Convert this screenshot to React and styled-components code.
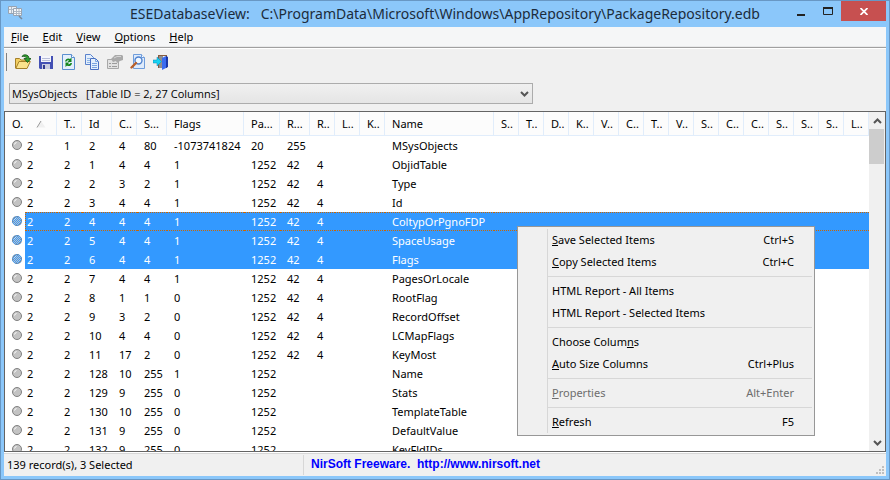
import React from 'react';
import styled, { createGlobalStyle, css } from 'styled-components';

const GlobalStyle = createGlobalStyle`
  * {
    box-sizing: border-box;
  }
  body {
    margin: 0;
    font-family: 'Noto Sans', 'Open Sans', sans-serif;
    font-size: 11px;
    color: #000;
  }
  button,
  select {
    font: inherit;
    color: inherit;
  }
`;

const Window = styled.div`
  position: relative;
  display: flex;
  flex-direction: column;
  height: 100vh;
  padding: 0 3px 3px;
  background: #8bc7fa;
  border: 1px solid #6897c4;
  overflow: hidden;
`;

const TitleBar = styled.header`
  display: flex;
  height: 26px;
  flex: none;
  padding-left: 4px;
  svg {
    display: block;
  }
`;

const AppIcon = styled.svg`
  width: 16px;
  height: 16px;
  margin-top: 4px;
`;

const Title = styled.h1`
  flex: 1;
  margin: 0;
  padding-left: 79px;
  font-size: 14px;
  line-height: 26px;
  font-weight: 400;
  text-align: center;
  white-space: pre;
  color: #1c2c3c;
`;

const WindowButtons = styled.div`
  display: flex;
`;

const WindowButton = styled.button`
  display: flex;
  align-items: center;
  justify-content: center;
  width: ${({ $close }) => ($close ? '45px' : '27px')};
  height: 20px;
  padding: 0;
  border: 0;
  background: ${({ $close }) => ($close ? '#c75050' : 'transparent')};
`;

const Client = styled.div`
  display: flex;
  flex-direction: column;
  flex: 1;
  min-height: 0;
  background: #f0f0f0;
`;

const MenuBar = styled.nav`
  display: flex;
  flex: none;
  height: 20px;
  background: #f5f6f7;
  border-bottom: 1px solid #e8e9ea;
`;

const MenuButton = styled.button`
  padding: 0 7px;
  line-height: 20px;
  border: 0;
  background: transparent;
`;

const ToolBar = styled.div`
  display: flex;
  flex: none;
  align-items: center;
  gap: 7px;
  height: 28px;
  padding-left: 2px;
  border-top: 1px solid #a0a0a0;
  box-shadow: inset 0 1px #fff;
`;

const Grip = styled.span`
  width: 1px;
  height: 18px;
  margin-right: 1px;
  background: #808080;
`;

const ToolButton = styled.button`
  width: 16px;
  height: 16px;
  padding: 0;
  border: 0;
  background: transparent;
  svg {
    display: block;
  }
`;

const TableChooser = styled.div`
  flex: none;
  padding: 8px 5px 7px;
`;

const ComboBox = styled.div`
  position: relative;
  width: 524px;
  max-width: 100%;
  svg {
    position: absolute;
    right: 4px;
    top: 8px;
    pointer-events: none;
  }
`;

const Select = styled.select`
  display: block;
  appearance: none;
  width: 100%;
  height: 21px;
  padding: 0 2px;
  font-family: 'Open Sans', sans-serif;
  border: 1px solid #acacac;
  border-radius: 0;
  background: linear-gradient(#f0f0f0, #e5e5e5);
`;

const ListView = styled.div`
  display: flex;
  flex: 1;
  min-height: 0;
  border: 1px solid #646464;
  background: #fff;
`;

const ListBody = styled.div`
  flex: 1;
  min-width: 0;
  overflow: hidden;
`;

const Table = styled.table`
  table-layout: fixed;
  width: 100%;
  border-collapse: separate;
  border-spacing: 0;
`;

const HeadCell = styled.th`
  height: 24px;
  padding: 0 0 0 7px;
  font-weight: 400;
  text-align: left;
  white-space: nowrap;
  background: #fcfcfc;
  border-right: 1px solid #e1edfb;
  border-bottom: 1px solid #e1edfb;
  svg {
    margin-left: 13px;
  }
`;

const Cell = styled.td`
  height: 19px;
  padding: 0 0 0 ${({ $first }) => ($first ? '2px' : '7px')};
  line-height: 17px;
  white-space: nowrap;
`;

const IconCell = styled.td`
  height: 19px;
  padding: 0 0 0 7px;
  svg {
    display: block;
  }
`;

const Row = styled.tr`
  ${({ $selected }) =>
    $selected &&
    css`
      ${Cell} {
        color: #fff;
        background: #3399ff;
      }
    `}
  ${({ $focused }) =>
    $focused &&
    css`
      ${Cell} {
        border-top: 1px dotted #cc6600;
        border-bottom: 1px dotted #cc6600;
      }
      ${Cell}:nth-child(2) {
        border-left: 1px dotted #cc6600;
        padding-left: 1px;
      }
    `}
`;

const ScrollBar = styled.div`
  display: flex;
  flex-direction: column;
  flex: none;
  width: 16px;
  background: #f0f0f0;
`;

const ScrollButton = styled.button`
  display: flex;
  align-items: center;
  justify-content: center;
  height: 17px;
  padding: 0;
  border: 0;
  background: transparent;
`;

const ScrollTrack = styled.div`
  flex: 1;
`;

const ScrollThumb = styled.div`
  height: 35px;
  margin-right: 1px;
  background: #cdcdcd;
`;

const StatusBar = styled.footer`
  display: flex;
  flex: none;
  align-items: center;
  height: 24px;
  border-top: 1px solid #fff;
  box-shadow: inset 0 1px #d7d7d7;
`;

const StatusText = styled.span`
  width: 299px;
  padding-left: 3px;
`;

const StatusLink = styled.a`
  flex: 1;
  height: 20px;
  padding-left: 7px;
  line-height: 18px;
  border-left: 1px solid #d7d7d7;
  font-family: 'Liberation Sans', Arial, sans-serif;
  font-size: 12px;
  font-weight: 700;
  white-space: pre;
  text-decoration: none;
  color: #0000ff;
`;

const SizeGrip = styled.svg`
  align-self: flex-end;
  margin: 0 2px 2px 0;
`;

const ContextMenu = styled.div`
  position: absolute;
  left: 516px;
  top: 225px;
  width: 298px;
  padding: 2px;
  border: 1px solid #979797;
  background: linear-gradient(#d7d7d7, #d7d7d7) 29px 2px / 1px calc(100% - 4px)
    no-repeat #f0f0f0;
`;

const MenuItem = styled.button`
  display: flex;
  justify-content: space-between;
  width: 100%;
  height: 22px;
  padding: 0 18px 0 32px;
  line-height: 22px;
  border: 0;
  background: transparent;
  color: ${({ disabled }) => (disabled ? '#6d6d6d' : '#000')};
`;

const Separator = styled.hr`
  height: 1px;
  margin: 3px 0 3px 28px;
  border: 0;
  background: #d7d7d7;
`;

const columns = [
  ['T..', 25], ['Id', 30], ['C..', 25], ['S...', 30], ['Flags', 77],
  ['Pa...', 36], ['R...', 30], ['R..', 25], ['L..', 25], ['K..', 25],
  ['Name', 109], ['S..', 25], ['T..', 25], ['D..', 25], ['K..', 25],
  ['V..', 25], ['C..', 25], ['T..', 25], ['V..', 25], ['S..', 25],
  ['C..', 25], ['C..', 25], ['S..', 25], ['S..', 25], ['S..', 25],
];

const records = [
  [2, 1, 2, 4, 80, -1073741824, 20, 255, '', '', '', 'MSysObjects'],
  [2, 2, 1, 4, 4, 1, 1252, 42, 4, '', '', 'ObjidTable'],
  [2, 2, 2, 3, 2, 1, 1252, 42, 4, '', '', 'Type'],
  [2, 2, 3, 4, 4, 1, 1252, 42, 4, '', '', 'Id'],
  [2, 2, 4, 4, 4, 1, 1252, 42, 4, '', '', 'ColtypOrPgnoFDP'],
  [2, 2, 5, 4, 4, 1, 1252, 42, 4, '', '', 'SpaceUsage'],
  [2, 2, 6, 4, 4, 1, 1252, 42, 4, '', '', 'Flags'],
  [2, 2, 7, 4, 4, 1, 1252, 42, 4, '', '', 'PagesOrLocale'],
  [2, 2, 8, 1, 1, 0, 1252, 42, 4, '', '', 'RootFlag'],
  [2, 2, 9, 3, 2, 0, 1252, 42, 4, '', '', 'RecordOffset'],
  [2, 2, 10, 4, 4, 0, 1252, 42, 4, '', '', 'LCMapFlags'],
  [2, 2, 11, 17, 2, 0, 1252, 42, 4, '', '', 'KeyMost'],
  [2, 2, 128, 10, 255, 1, 1252, '', '', '', '', 'Name'],
  [2, 2, 129, 9, 255, 0, 1252, '', '', '', '', 'Stats'],
  [2, 2, 130, 10, 255, 0, 1252, '', '', '', '', 'TemplateTable'],
  [2, 2, 131, 9, 255, 0, 1252, '', '', '', '', 'DefaultValue'],
  [2, 2, 132, 9, 255, 0, 1252, '', '', '', '', 'KeyFldIDs'],
];

function Bullet({ selected }) {
  return (
    <svg width="10" height="11" viewBox="0 0 10 11">
      <defs>
        <pattern id="dither" width="2" height="2" patternUnits="userSpaceOnUse">
          <path d="M0 0h1v1H0zM1 1h1v1H1z" fill="#3399ff" />
        </pattern>
      </defs>
      <circle cx="5" cy="5" r="4.500" fill="#c3c3c3" stroke="#808080" />
      <path d="M2.500 4.500a2.500 2.500 0 0 1 2-2" stroke="#fff" fill="none" />
      {selected && <circle cx="5" cy="5" r="5" fill="url(#dither)" />}
    </svg>
  );
}

function OpenIcon() {
  return (
    <svg width="16" height="16" viewBox="0 0 16 16">
      <path d="M.5 14V4.500h4l1.500 1.500h6v3" fill="#f3cf62" stroke="#a5802a" />
      <path d="M.8 14.500 4 7.500h11.300l-3.300 7z" fill="#fbe38c" stroke="#a5802a" />
      <path d="M7 2.500c1-2.500 7-2.500 7 2h2L12.500 8.500 9 4.500h2.500C11.500 3 9.500 2 7 2.500z" fill="#2f9e2f" stroke="#125012" strokeWidth=".8" />
    </svg>
  );
}

function SaveIcon() {
  return (
    <svg width="16" height="16" viewBox="0 0 16 16">
      <path d="M1 2h14v13H2l-1-1z" fill="#4350b4" />
      <path d="M3 2h10v6H3z" fill="#f4f5fb" />
      <path d="M4 4.500h8M4 6.500h8" stroke="#b7bcd8" />
      <path d="M4 10h8v5H4z" fill="#c9cce0" />
      <path d="M5 11h2v4H5z" fill="#30398e" />
    </svg>
  );
}

function RefreshIcon() {
  return (
    <svg width="16" height="16" viewBox="0 0 16 16">
      <path d="M1.500.5h9l3 3v12h-12z" fill="#e3effc" stroke="#5b8fd0" />
      <path d="M10.500.5v3h3" fill="#fff" stroke="#5b8fd0" />
      <path d="M4 7.500C4.500 4 8 4 9 5l1.500-1.500V8H6.500L8 6.500C7 6 6 6.500 5.500 7.500z" fill="#14851c" />
      <path d="M11 9c-.5 3.500-4 3.500-5 2.500L4.500 13V8.500h4L7 10c1 .5 2 0 2.500-1z" fill="#14851c" />
    </svg>
  );
}

function CopyIcon() {
  return (
    <svg width="16" height="16" viewBox="0 0 16 16">
      <path d="M1.500.5h5l3 3v7h-8z" fill="#e3effc" stroke="#5a82cc" />
      <path d="M3 4.500h3M3 6.500h3M3 8.500h3" stroke="#8fb4e6" />
      <path d="M6.500 4.500h5l3 3v8h-8z" fill="#e3effc" stroke="#4a6fc0" />
      <path d="M11.500 4.500v3h3M8 9.500h5M8 11.500h5M8 13.500h5" fill="none" stroke="#7aa4e0" />
    </svg>
  );
}

function PropertiesIcon() {
  return (
    <svg width="16" height="16" viewBox="0 0 16 16">
      <path d="M.5 5.500h11v9H.5z" fill="#e2e2e2" stroke="#a8a8a8" />
      <path d="M2 9.500h2M5 9.500h5M2 12.500h2M5 12.500h5" stroke="#9c9c9c" />
      <path d="m4 5 4-4h7l1 1v4l-3 1-3 2-1-2-3 1z" fill="#a9a9a9" />
      <path d="m7 4 3-1.500h4" stroke="#d4d4d4" fill="none" />
    </svg>
  );
}

function FindIcon() {
  return (
    <svg width="16" height="16" viewBox="0 0 16 16">
      <path d="M3.500.5h8l3 3v11h-11z" fill="#dfebfb" stroke="#6f9ddb" />
      <path d="M11.500.5v3h3" fill="#fff" stroke="#6f9ddb" />
      <circle cx="8.500" cy="6.500" r="3.500" fill="#f2f9ff" stroke="#4f82cf" strokeWidth="1.400" />
      <path d="m6 9-4.500 4.500" stroke="#b8602c" strokeWidth="2.400" strokeLinecap="round" />
    </svg>
  );
}

function ExitIcon() {
  return (
    <svg width="16" height="16" viewBox="0 0 16 16">
      <path d="M5 1h9v13h-1V2H6v12H5z" fill="#865c40" />
      <path d="M6 2h4v12H6z" fill="#8e8e8e" />
      <path d="m9 4 4-2v12l-4 2z" fill="#3a6cf0" />
      <path d="m13 2 2 1v10l-2 1z" fill="#1a38a8" />
      <path d="M0 6h4V3l4.500 4.500L4 12V9H0z" fill="#17d3f2" stroke="#0e86b8" strokeWidth=".5" />
    </svg>
  );
}

const tools = [
  ['Open', OpenIcon],
  ['Save', SaveIcon],
  ['Refresh', RefreshIcon],
  ['Copy', CopyIcon],
  ['Properties', PropertiesIcon],
  ['Find', FindIcon],
  ['Exit', ExitIcon],
];

function Chevron({ up }) {
  return (
    <svg width="9" height="6" viewBox="0 0 9 6">
      <path
        d={up ? 'M1 5l3.500-3.500L8 5' : 'M1 1l3.500 3.500L8 1'}
        fill="none"
        stroke="#555"
        strokeWidth="2"
      />
    </svg>
  );
}

export default function App() {
  return (
    <>
      <GlobalStyle />
      <Window>
        <TitleBar>
          <AppIcon viewBox="0 0 16 16">
            <path d="M.5 1.500h8v7h-8z" fill="#eceff3" stroke="#98a4b3" />
            <path d="M5.500 3.500h8v7h-8z" fill="#f6f8fa" stroke="#98a4b3" />
            <path d="M1 4.500h4M3.500 2v6M6 6.500h7M6 8.500h7M8.500 4v6M11 4v6" stroke="#aeb8c4" />
            <path d="m11 11 3 3" stroke="#78889a" strokeWidth="1.500" />
          </AppIcon>
          <Title>
            {'ESEDatabaseView:   C:\\ProgramData\\Microsoft\\Windows\\AppRepository\\PackageRepository.edb'}
          </Title>
          <WindowButtons>
            <WindowButton aria-label="Minimize">
              <svg width="8" height="10">
                <path d="M0 8h8v2H0z" fill="#222" />
              </svg>
            </WindowButton>
            <WindowButton aria-label="Maximize">
              <svg width="10" height="8">
                <path d="M.5 1h9v6.500h-9z" fill="none" stroke="#222" />
                <path d="M0 0h10v2H0z" fill="#222" />
              </svg>
            </WindowButton>
            <WindowButton $close aria-label="Close">
              <svg width="8" height="7" viewBox="0 0 8 7">
                <path d="m.5 0 7 7M7.500 0l-7 7" stroke="#fff" strokeWidth="1.700" />
              </svg>
            </WindowButton>
          </WindowButtons>
        </TitleBar>

        <Client>
          <MenuBar>
            <MenuButton><u>F</u>ile</MenuButton>
            <MenuButton><u>E</u>dit</MenuButton>
            <MenuButton><u>V</u>iew</MenuButton>
            <MenuButton><u>O</u>ptions</MenuButton>
            <MenuButton><u>H</u>elp</MenuButton>
          </MenuBar>

          <ToolBar>
            <Grip />
            {tools.map(([label, Icon]) => (
              <ToolButton key={label} aria-label={label} disabled={label === 'Properties'}>
                <Icon />
              </ToolButton>
            ))}
          </ToolBar>

          <TableChooser>
            <ComboBox>
              <Select aria-label="Table">
                <option>{'MSysObjects\u00a0\u00a0 [Table ID = 2, 27 Columns]'}</option>
              </Select>
              <Chevron />
            </ComboBox>
          </TableChooser>

          <ListView>
            <ListBody>
              <Table>
                <colgroup>
                  <col style={{ width: 20 }} />
                  <col style={{ width: 32 }} />
                  {columns.map(([, width], i) => (
                    <col key={i} style={{ width }} />
                  ))}
                  <col />
                </colgroup>
                <thead>
                  <tr>
                    <HeadCell colSpan={2}>
                      O.
                      <svg width="10" height="7" viewBox="0 0 10 7">
                        <path d="M5 0 9.500 6.500H1z" fill="#f0f0f0" />
                        <path d="M5 0 1 6.500" stroke="#999" />
                      </svg>
                    </HeadCell>
                    {columns.map(([label], i) => (
                      <HeadCell key={i}>{label}</HeadCell>
                    ))}
                    <HeadCell>L..</HeadCell>
                  </tr>
                </thead>
                <tbody>
                  {records.map((record, i) => {
                    const selected = i >= 4 && i <= 6;
                    return (
                      <Row key={i} $selected={selected} $focused={i === 4}>
                        <IconCell>
                          <Bullet selected={selected} />
                        </IconCell>
                        {record.map((value, j) => (
                          <Cell key={j} $first={j === 0}>{value}</Cell>
                        ))}
                        <Cell colSpan={15} />
                      </Row>
                    );
                  })}
                </tbody>
              </Table>
            </ListBody>
            <ScrollBar>
              <ScrollButton aria-label="Scroll up"><Chevron up /></ScrollButton>
              <ScrollTrack>
                <ScrollThumb />
              </ScrollTrack>
              <ScrollButton aria-label="Scroll down"><Chevron /></ScrollButton>
            </ScrollBar>
          </ListView>

          <StatusBar>
            <StatusText>139 record(s), 3 Selected</StatusText>
            <StatusLink href="http://www.nirsoft.net">
              {'NirSoft Freeware.  http://www.nirsoft.net'}
            </StatusLink>
            <SizeGrip width="8" height="8">
              <path d="M6 0h2v2H6zM3 3h2v2H3zM6 3h2v2H6zM0 6h2v2H0zM3 6h2v2H3zM6 6h2v2H6z" fill="#bfbfbf" />
            </SizeGrip>
          </StatusBar>
        </Client>

        <ContextMenu role="menu">
          <MenuItem role="menuitem"><span><u>S</u>ave Selected Items</span><span>Ctrl+S</span></MenuItem>
          <MenuItem role="menuitem"><span><u>C</u>opy Selected Items</span><span>Ctrl+C</span></MenuItem>
          <Separator />
          <MenuItem role="menuitem">HTML Report - All Items</MenuItem>
          <MenuItem role="menuitem">HTML Report - Selected Items</MenuItem>
          <Separator />
          <MenuItem role="menuitem"><span>Choose Colum<u>n</u>s</span></MenuItem>
          <MenuItem role="menuitem"><span><u>A</u>uto Size Columns</span><span>Ctrl+Plus</span></MenuItem>
          <Separator />
          <MenuItem role="menuitem" disabled><span><u>P</u>roperties</span><span>Alt+Enter</span></MenuItem>
          <Separator />
          <MenuItem role="menuitem"><span><u>R</u>efresh</span><span>F5</span></MenuItem>
        </ContextMenu>
      </Window>
    </>
  );
}
